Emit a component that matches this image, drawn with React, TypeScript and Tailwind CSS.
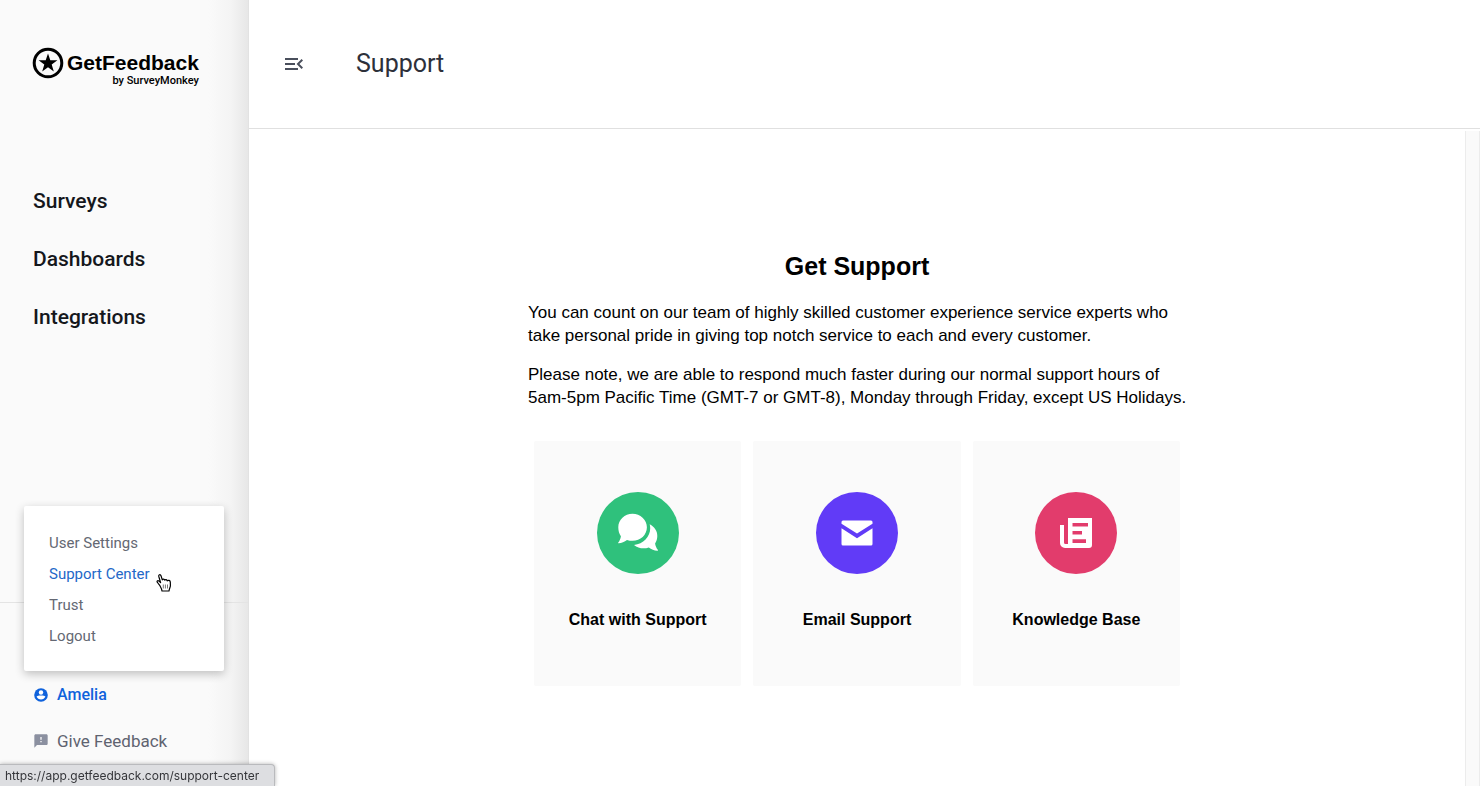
import type { ReactNode } from "react";
import { MdFeedback, MdMenuOpen } from "react-icons/md";

function Logo() {
  return (
    <a href="#home" className="flex text-black">
      <svg viewBox="0 0 32 32" className="h-8 w-8 shrink-0" aria-hidden="true">
        <circle cx="16" cy="16" r="13.8" fill="none" stroke="currentColor" strokeWidth="3" />
        <path
          fill="currentColor"
          d="M16 6.500l2.300 6.700 7.100.1-5.700 4.300 2.100 6.800-5.800-4.100-5.800 4.100 2.100-6.800-5.700-4.300 7.100-.1z"
        />
      </svg>
      <span className="flex flex-col items-end pl-[3px] pt-1">
        <span className="font-['Liberation_Sans',Arial,sans-serif] text-[21px] font-bold leading-6">
          GetFeedback
        </span>
        <span className="font-['Roboto',sans-serif] text-[11px] font-medium leading-3">
          by SurveyMonkey
        </span>
      </span>
    </a>
  );
}

function AccountIcon() {
  return (
    <svg viewBox="0 0 16 16" className="size-4" aria-hidden="true">
      <circle cx="8" cy="8" r="6.800" fill="currentColor" />
      <circle cx="8" cy="5.500" r="2.200" fill="white" />
      <path d="M3.600 9.600C3.800 8.900 5.900 8.500 8 8.500s4.200.4 4.400 1.100C11.600 11.600 10 12.600 8 12.600S4.400 11.600 3.600 9.600z" fill="white" />
    </svg>
  );
}

function ChatIcon() {
  return (
    <svg viewBox="0 0 42 42" className="size-[42px]" fill="currentColor" aria-hidden="true">
      <path d="M15.500 1.700C23.300 1.700 29.900 7.600 29.900 15.200S23.500 28.800 15.500 28.800C13.500 28.800 11.700 28.500 10 27.900 7.500 29.700 4.600 31 1.600 31.300 1.100 31.300 1 30.900 1.300 30.500 2.700 28.700 3.600 26.500 3.900 24.200 2.200 21.700 1.300 18.700 1.300 15.200 1.300 7.600 7.700 1.700 15.500 1.700z" />
      <path d="M32.700 12.300C37.500 14.700 40.300 19 40.300 24 40.300 26.800 39.500 29.300 38.100 31.500 38.400 33.900 39.400 36 40.800 37.800 41.200 38.400 40.900 38.900 40.200 38.800 37.200 38.400 34.300 37.200 31.800 35.400 27 37.200 21.100 36.500 17 32.900 26.300 32.100 33.200 24.900 33.200 16.300 33.200 14.900 33 13.600 32.700 12.300z" />
    </svg>
  );
}

function MailIcon() {
  return (
    <svg viewBox="0 0 32 26" className="h-[26px] w-8" fill="currentColor" aria-hidden="true">
      <path d="M2 .5h28a1.500 1.500 0 0 1 1.500 1.500v1.700L16 13.600.5 3.700V2A1.500 1.500 0 0 1 2 .5z" />
      <path d="M.5 8.200L16 18.200l15.500-10V24a1.500 1.500 0 0 1-1.500 1.500H2A1.500 1.500 0 0 1 .5 24z" />
    </svg>
  );
}

function ArticleIcon() {
  return (
    <svg viewBox="0 0 34 32" className="h-8 w-[34px]" aria-hidden="true">
      <path
        fill="currentColor"
        fillRule="evenodd"
        d="M9 1h24v27a3 3 0 0 1-3 3H6a5 5 0 0 1-5-5V8h4v17.500a1.500 1.500 0 0 0 1.500 1.500H9zM13.500 6v3.600H29V6zM13.500 14v3.600H23V14zM13.500 22.300v3.600H27v-3.600z"
      />
    </svg>
  );
}

function PointerIcon() {
  return (
    <svg
      viewBox="0 0 17 20"
      className="absolute left-[131px] top-[67px] h-5 w-[17px]"
      aria-hidden="true"
    >
      <path
        d="M4.700 12.300L2.500 9.500C1.300 8.200 2.700 7 4 8.100L5.600 9.600 3.800 3.500C3.300 1.500 5.400 1 6 2.800L7.300 6.900C7.700 5.600 9.400 5.800 9.700 7.200 10.400 6.100 11.900 6.500 12.200 7.800 13.300 6.800 15.200 7.300 15.300 9L15.400 12.500C15.400 14.500 14.300 15.400 14 18H7C7 16 5.700 14.200 4.700 12.300z"
        fill="white"
        stroke="black"
        strokeWidth="1.200"
        strokeLinejoin="round"
      />
      <path d="M8.300 11.500v4M10.400 11.500v4M12.500 11.500v4" stroke="#555" strokeWidth=".8" />
    </svg>
  );
}

const navItems = ["Surveys", "Dashboards", "Integrations"];
const menuItems = ["User Settings", "Support Center", "Trust", "Logout"];

function Sidebar() {
  return (
    <aside className="flex w-[249px] shrink-0 flex-col border-r border-[#e2e2e2] bg-[linear-gradient(to_right,#fafafa_84%,#f4f4f4_93%,#e7e7e7)] font-['Roboto',sans-serif]">
      <div className="px-8 pt-[47px]">
        <Logo />
      </div>
      <nav className="flex flex-col gap-[34px] px-[33px] pt-[102px]">
        {navItems.map((item) => (
          <a key={item} href={`#${item}`} className="text-[21px] font-medium leading-6 text-[#15171c]">
            {item}
          </a>
        ))}
      </nav>
      <footer className="relative mt-auto flex flex-col gap-[22px] border-t border-[#e4e4e4] px-[33px] pb-[33px] pt-20">
        <div className="absolute bottom-[115px] left-6 flex w-[200px] flex-col gap-[11px] rounded-xs bg-white px-[25px] pb-[25px] pt-[27px] shadow-[0_3px_10px_rgba(0,0,0,0.24)]">
          {menuItems.map((item) => (
            <a
              key={item}
              href={`#${item}`}
              className={`text-[15px] leading-5 ${item === "Support Center" ? "text-[#2468c8]" : "text-[#646873]"}`}
            >
              {item}
            </a>
          ))}
          <PointerIcon />
        </div>
        <button type="button" className="flex items-center gap-2 text-left text-base font-medium leading-6 text-[#0f62dc]">
          <AccountIcon />
          Amelia
        </button>
        <button type="button" className="flex items-center gap-2 text-left text-[17px] leading-6 text-[#5f6370]">
          <MdFeedback size={16} className="text-[#8b90a0]" />
          Give Feedback
        </button>
      </footer>
    </aside>
  );
}

function SupportCard({ title, color, children }: { title: string; color: string; children: ReactNode }) {
  return (
    <a href={`#${title}`} className="flex h-[245px] flex-1 flex-col items-center gap-[34px] rounded-xs bg-[#fafafa] pt-[51px]">
      <span className={`flex size-[82px] items-center justify-center rounded-full text-white ${color}`}>
        {children}
      </span>
      <span className="text-base font-bold leading-6">{title}</span>
    </a>
  );
}

export default function App() {
  return (
    <div className="flex min-h-screen bg-white text-black">
      <Sidebar />
      <div className="flex min-w-0 flex-1 flex-col">
        <header className="flex h-[129px] items-center gap-[50px] border-b border-[#e0e0e0] pl-[33px]">
          <button type="button" aria-label="Collapse menu" className="text-[#4a4f5c]">
            <MdMenuOpen size={24} />
          </button>
          <h1 className="font-['Roboto',sans-serif] text-[25px] leading-8 text-[#2d303a]">Support</h1>
        </header>
        <div className="flex flex-1 pt-0.5">
          <main className="flex flex-1 flex-col items-center pt-[119px] font-['Liberation_Sans',Arial,sans-serif]">
            <div className="w-full max-w-[658px]">
              <h2 className="text-center text-[25px] font-bold leading-8">Get Support</h2>
              <div className="-mr-4 flex flex-col gap-4 pt-[19px] text-[17px] leading-[23px]">
                <p>
                  You can count on our team of highly skilled customer experience service experts who
                  <br />
                  take personal pride in giving top notch service to each and every customer.
                </p>
                <p>
                  Please note, we are able to respond much faster during our normal support hours of
                  <br />
                  5am-5pm Pacific Time (GMT-7 or GMT-8), Monday through Friday, except US Holidays.
                </p>
              </div>
              <div className="flex gap-3 px-1.5 pt-8">
                <SupportCard title="Chat with Support" color="bg-[#2fc17c]">
                  <ChatIcon />
                </SupportCard>
                <SupportCard title="Email Support" color="bg-[#613bf7]">
                  <MailIcon />
                </SupportCard>
                <SupportCard title="Knowledge Base" color="bg-[#e23c6c]">
                  <ArticleIcon />
                </SupportCard>
              </div>
            </div>
          </main>
          <div className="w-[15px] shrink-0 border-x border-[#ececec] bg-[#fafafa]" />
        </div>
      </div>
      <div className="fixed bottom-0 left-0 rounded-tr-sm border-r border-t border-[#b9babd] bg-[#dddee1] pb-px pl-[5px] pr-[15px] pt-0.5 font-['Inter',sans-serif] text-xs leading-[18px] text-[#35363a] shadow-[0_0_4px_rgba(0,0,0,0.3)]">
        https://app.getfeedback.com/support-center
      </div>
    </div>
  );
}
